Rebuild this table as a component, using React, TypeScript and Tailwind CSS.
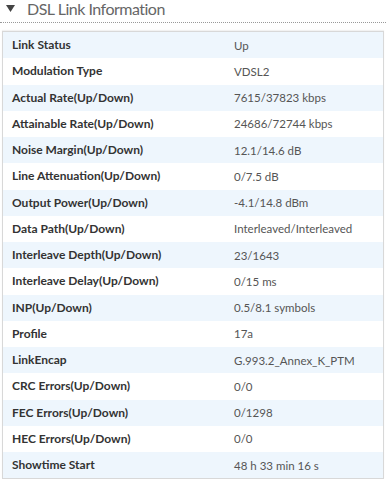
import React from 'react';

const rows: [string, string][] = [
  ['Link Status', 'Up'],
  ['Modulation Type', 'VDSL2'],
  ['Actual Rate(Up/Down)', '7615/37823 kbps'],
  ['Attainable Rate(Up/Down)', '24686/72744 kbps'],
  ['Noise Margin(Up/Down)', '12.1/14.6 dB'],
  ['Line Attenuation(Up/Down)', '0/7.5 dB'],
  ['Output Power(Up/Down)', '-4.1/14.8 dBm'],
  ['Data Path(Up/Down)', 'Interleaved/Interleaved'],
  ['Interleave Depth(Up/Down)', '23/1643'],
  ['Interleave Delay(Up/Down)', '0/15 ms'],
  ['INP(Up/Down)', '0.5/8.1 symbols'],
  ['Profile', '17a'],
  ['LinkEncap', 'G.993.2_Annex_K_PTM'],
  ['CRC Errors(Up/Down)', '0/0'],
  ['FEC Errors(Up/Down)', '0/1298'],
  ['HEC Errors(Up/Down)', '0/0'],
  ['Showtime Start', '48 h 33 min 16 s'],
];

export default function App() {
  return (
    <div className="w-[386px] h-[480px] overflow-hidden bg-white font-['Lato',sans-serif]">
      {/* Section header */}
      <div className="flex items-start h-[23px] pt-[1px] pl-[6px] text-[#666] border-b border-dotted border-[#999]">
        <svg width="9" height="7" viewBox="0 0 9 7" className="mr-[12px] mt-[4px] fill-[#444]">
          <path d="M0 0 H9 L4.5 7 Z" />
        </svg>
        <span className="text-[16px] leading-[16px] tracking-[-0.5px]">DSL Link Information</span>
      </div>

      {/* Info table */}
      <div className="mt-[8px] ml-[2px] w-[382px] border border-[#d8d8d8] shadow-[0_-1px_1px_rgba(0,0,0,0.05)]">
        {rows.map(([label, value], i) => (
          <div
            key={label}
            className={`flex items-center h-[26.25px] ${i % 2 === 0 ? 'bg-[#eef6fd]' : 'bg-white'}`}
          >
            <span className="w-[231px] pl-[9px] text-[12px] font-bold text-[#333]">{label}</span>
            <span className="text-[11.5px] text-[#555]">{value}</span>
          </div>
        ))}
      </div>
    </div>
  );
}
